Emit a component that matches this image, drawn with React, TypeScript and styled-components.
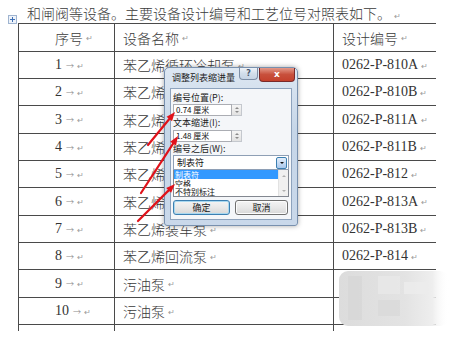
import styled, { createGlobalStyle } from 'styled-components';

const GlobalStyle = createGlobalStyle`
  body {
    margin: 0;
    background: #fff;
    font-family: "Noto Sans CJK SC", sans-serif;
    color: #3a3a3a;
  }
`;

const rows = [
  { no: '1', name: '苯乙烯循环冷却泵', code: '0262-P-810A' },
  { no: '2', name: '苯乙烯进料泵', code: '0262-P-810B' },
  { no: '3', name: '苯乙烯输送泵', code: '0262-P-811A' },
  { no: '4', name: '苯乙烯输送泵', code: '0262-P-811B' },
  { no: '5', name: '苯乙烯卸车泵', code: '0262-P-812' },
  { no: '6', name: '苯乙烯装车泵', code: '0262-P-813A' },
  { no: '7', name: '苯乙烯装车泵', code: '0262-P-813B' },
  { no: '8', name: '苯乙烯回流泵', code: '0262-P-814' },
  { no: '9', name: '污油泵', code: '' },
  { no: '10', name: '污油泵', code: '' },
];

const heights = [27, 27, 28, 27, 27, 28, 27, 27, 28, 27];

const Page = styled.div`
  position: relative;
  width: 474px;
  height: 355px;
  overflow: hidden;
`;

const Caption = styled.div`
  box-sizing: border-box;
  height: 23px;
  padding: 4px 0 0 27px;
  line-height: 19px;
  font-size: 14px;
  font-weight: 300;
  white-space: nowrap;
`;

const MoveHandle = styled.div`
  position: absolute;
  left: 8px;
  top: 15px;
  width: 7px;
  height: 7px;
  border: 1px solid #9fb4d0;
  background: #eef3fa;
  &::before, &::after {
    content: '';
    position: absolute;
    background: #3d6fb5;
  }
  &::before { left: 3px; top: 1px; width: 1px; height: 5px; }
  &::after { left: 1px; top: 3px; width: 5px; height: 1px; }
`;

const Table = styled.div`
  margin-left: 18px;
  width: 418px;
  border-top: 1px solid #4a4a4a;
`;

const Row = styled.div<{ $h: number; $last?: boolean }>`
  display: grid;
  grid-template-columns: 96px 219px 103px;
  box-sizing: border-box;
  height: ${p => p.$h}px;
  border-bottom: ${p => (p.$last ? 'none' : '1px solid #4a4a4a')};
`;

const Cell = styled.div<{ $pad: number }>`
  display: flex;
  align-items: center;
  border-left: 1px solid #4a4a4a;
  padding-left: ${p => p.$pad}px;
  font-size: 14px;
  font-weight: 300;
  white-space: nowrap;
  overflow: hidden;
`;

const Num = styled.span`
  font-family: "Liberation Serif", serif;
  font-size: 14px;
  color: #333;
`;

const Tab = styled.span`
  margin-left: 4px;
  font-size: 8px;
  color: #8a8a8a;
`;

const Mark = styled.span`
  margin-left: 3px;
  font-size: 8px;
  color: #9a9a9a;
`;

const Dialog = styled.div`
  position: absolute;
  left: 164px;
  top: 67px;
  width: 134px;
  box-sizing: border-box;
  display: flex;
  flex-direction: column;
  padding: 0 5px 5px 5px;
  background: linear-gradient(#dde7f2, #c6d6e8 40%, #c9d8ea);
  border: 1px solid #7890ae;
  border-radius: 5px 5px 3px 3px;
  box-shadow: 0 0 5px rgba(0, 0, 0, 0.35);
`;

const TitleBar = styled.div`
  display: flex;
  align-items: flex-start;
  height: 20px;
  margin-right: -3px;
`;

const Title = styled.div`
  flex: 1;
  padding-left: 2px;
  line-height: 20px;
  font-size: 9px;
  color: #222;
  white-space: nowrap;
`;

const CapButton = styled.div<{ $w: number; $h: number; $red?: boolean }>`
  width: ${p => p.$w}px;
  height: ${p => p.$h}px;
  box-sizing: border-box;
  display: flex;
  align-items: center;
  justify-content: center;
  font-family: "DejaVu Sans", sans-serif;
  font-size: ${p => (p.$red ? 9 : 8)}px;
  line-height: 1;
  font-weight: 700;
  color: ${p => (p.$red ? '#fff' : '#4a5a70')};
  border: 1px solid ${p => (p.$red ? '#7a2a2a' : '#7d8ea6')};
  border-top: none;
  border-radius: 0 0 4px 4px;
  background: ${p =>
    p.$red
      ? 'linear-gradient(#e49a8a, #c8503c 50%, #c4402c)'
      : 'linear-gradient(#eef3f9, #d2deeb 50%, #c6d4e5)'};
  & + & { margin-left: 1px; }
`;

const Client = styled.div`
  display: flex;
  flex-direction: column;
  padding: 2px 2px 4px 2px;
  background: #f4f6f9;
  border: 1px solid #8ea3bd;
`;

const Label = styled.div<{ $gap: number }>`
  margin-top: ${p => p.$gap}px;
  line-height: 13px;
  font-size: 9px;
  color: #222;
  white-space: nowrap;
`;

const SpinRow = styled.div<{ $gap: number }>`
  display: flex;
  margin-top: ${p => p.$gap}px;
`;

const TextBox = styled.div`
  box-sizing: border-box;
  width: 59px;
  height: 12px;
  padding-left: 2px;
  line-height: 10px;
  font-size: 8px;
  color: #111;
  background: #fff;
  border: 1px solid #abadb3;
  white-space: nowrap;
`;

const Spin = styled.div`
  box-sizing: border-box;
  width: 10px;
  height: 12px;
  display: flex;
  flex-direction: column;
  align-items: center;
  justify-content: space-evenly;
  background: linear-gradient(#f5f5f5, #e2e2e2);
  border: 1px solid #c4c8ce;
  border-left: none;
`;

const Tri = styled.span<{ $down?: boolean; $c?: string }>`
  width: 0;
  height: 0;
  border-left: 2px solid transparent;
  border-right: 2px solid transparent;
  ${p =>
    p.$down
      ? `border-top: 2px solid ${p.$c || '#8a8a8a'};`
      : `border-bottom: 2px solid ${p.$c || '#8a8a8a'};`}
`;

const Combo = styled.div`
  box-sizing: border-box;
  display: flex;
  align-items: center;
  width: 116px;
  height: 15px;
  padding: 0 1px 0 3px;
  background: #fff;
  border: 1px solid #8e9fb5;
  font-size: 9px;
  line-height: 13px;
  color: #111;
`;

const ComboText = styled.span`
  flex: 1;
`;

const ComboArrow = styled.div`
  box-sizing: border-box;
  width: 11px;
  height: 12px;
  display: flex;
  align-items: center;
  justify-content: center;
  background: linear-gradient(#e3eefb, #a9c8ec);
  border: 1px solid #3c7fb1;
  border-radius: 2px;
`;

const List = styled.div`
  box-sizing: border-box;
  display: flex;
  width: 116px;
  height: 27px;
  background: #fff;
  border: 1px solid #828790;
  border-top: none;
  overflow: hidden;
`;

const Items = styled.div`
  flex: 1;
`;

const Item = styled.div<{ $sel?: boolean }>`
  height: 8.5px;
  line-height: 9px;
  padding-left: 1px;
  font-size: 8px;
  color: ${p => (p.$sel ? '#fff' : '#111')};
  background: ${p => (p.$sel ? '#3399ff' : 'transparent')};
  white-space: nowrap;
  overflow: hidden;
`;

const ScrollBar = styled.div`
  width: 10px;
  display: flex;
  flex-direction: column;
  align-items: center;
  justify-content: space-between;
  padding: 5px 0 4px;
  box-sizing: border-box;
  background: #f0f0f0;
  border-left: 1px solid #e2e2e2;
`;

const ButtonRow = styled.div`
  display: flex;
  gap: 5px;
  margin-top: 3px;
`;

const Button = styled.div<{ $w: number; $focus?: boolean }>`
  box-sizing: border-box;
  width: ${p => p.$w}px;
  height: 15px;
  display: flex;
  align-items: center;
  justify-content: center;
  font-size: 9px;
  line-height: 13px;
  color: #222;
  border: 1px solid ${p => (p.$focus ? '#3c7fb1' : '#707070')};
  border-radius: 3px;
  background: linear-gradient(#f4f4f4, #e8e8e8 50%, #d8d8d8);
  box-shadow: ${p => (p.$focus ? 'inset 0 0 0 1px #a8d8f0' : 'inset 0 0 0 1px #fcfcfc')};
`;

const Overlay = styled.svg`
  position: absolute;
  left: 0;
  top: 0;
  pointer-events: none;
`;

const arrows = [
  [148, 145, 175, 112],
  [141, 193, 178, 136],
  [138, 221, 175, 184],
];

function Arrow({ x1, y1, x2, y2 }: { x1: number; y1: number; x2: number; y2: number }) {
  const a = Math.atan2(y2 - y1, x2 - x1);
  const len = 9;
  const w = 3.5;
  const bx = x2 - Math.cos(a) * len;
  const by = y2 - Math.sin(a) * len;
  const px = -Math.sin(a) * w;
  const py = Math.cos(a) * w;
  return (
    <g>
      <line x1={x1} y1={y1} x2={bx} y2={by} stroke="#e0121a" strokeWidth={2.2} strokeLinecap="round" />
      <polygon points={`${x2},${y2} ${bx + px},${by + py} ${bx - px},${by - py}`} fill="#e0121a" />
    </g>
  );
}

export default function App() {
  return (
    <Page>
      <GlobalStyle />
      <MoveHandle />
      <Caption>
        和闸阀等设备。主要设备设计编号和工艺位号对照表如下。<Mark>↵</Mark>
      </Caption>
      <Table>
        <Row $h={28}>
          <Cell $pad={36}>序号<Mark>↵</Mark></Cell>
          <Cell $pad={8}>设备名称<Mark>↵</Mark></Cell>
          <Cell $pad={8}>设计编号<Mark>↵</Mark></Cell>
        </Row>
        {rows.map((r, i) => (
          <Row key={r.no} $h={heights[i]}>
            <Cell $pad={36}>
              <Num>{r.no}</Num>
              <Tab>→</Tab>
              <Mark>↵</Mark>
            </Cell>
            <Cell $pad={8}>
              {r.name}
              <Mark>↵</Mark>
            </Cell>
            <Cell $pad={8}>
              {r.code && (
                <>
                  <Num>{r.code}</Num>
                  <Mark>↵</Mark>
                </>
              )}
            </Cell>
          </Row>
        ))}
        <Row $h={6} $last>
          <Cell $pad={0} />
          <Cell $pad={0} />
          <Cell $pad={0} />
        </Row>
      </Table>

      <Overlay width={474} height={355}>
        <defs>
          <linearGradient id="fade" x1="0" x2="1" y1="0" y2="0">
            <stop offset="0" stopColor="#dcdcdc" />
            <stop offset="0.6" stopColor="#e3e3e3" />
            <stop offset="0.85" stopColor="#eeeeee" />
            <stop offset="1" stopColor="#ffffff" stopOpacity="0" />
          </linearGradient>
        </defs>
        <rect x={339} y={271} width={110} height={55} rx={9} fill="url(#fade)" />
        <rect x={348} y={276} width={14} height={44} fill="#d6d6d6" opacity={0.7} />
        <rect x={378} y={276} width={22} height={18} fill="#e8e8e8" opacity={0.8} />
        <rect x={378} y={300} width={22} height={16} fill="#d9d9d9" opacity={0.7} />
        <rect x={404} y={282} width={26} height={12} fill="#ececec" opacity={0.8} />
      </Overlay>

      <Dialog>
        <TitleBar>
          <Title>调整列表缩进量</Title>
          <CapButton $w={19} $h={12}>?</CapButton>
          <CapButton $w={36} $h={14} $red>x</CapButton>
        </TitleBar>
        <Client>
          <Label $gap={0}>编号位置(P):</Label>
          <SpinRow $gap={0}>
            <TextBox>0.74 厘米</TextBox>
            <Spin>
              <Tri />
              <Tri $down />
            </Spin>
          </SpinRow>
          <Label $gap={0}>文本缩进(I):</Label>
          <SpinRow $gap={1}>
            <TextBox>1.48 厘米</TextBox>
            <Spin>
              <Tri />
              <Tri $down />
            </Spin>
          </SpinRow>
          <Label $gap={0}>编号之后(W):</Label>
          <Combo>
            <ComboText>制表符</ComboText>
            <ComboArrow>
              <Tri $down $c="#111" />
            </ComboArrow>
          </Combo>
          <List>
            <Items>
              <Item $sel>制表符</Item>
              <Item>空格</Item>
              <Item>不特别标注</Item>
            </Items>
            <ScrollBar>
              <Tri $c="#b0b0b0" />
              <Tri $down $c="#b0b0b0" />
            </ScrollBar>
          </List>
          <ButtonRow>
            <Button $w={57} $focus>确定</Button>
            <Button $w={53}>取消</Button>
          </ButtonRow>
        </Client>
      </Dialog>

      <Overlay width={474} height={355}>
        {arrows.map(([x1, y1, x2, y2], i) => (
          <Arrow key={i} x1={x1} y1={y1} x2={x2} y2={y2} />
        ))}
      </Overlay>
    </Page>
  );
}
